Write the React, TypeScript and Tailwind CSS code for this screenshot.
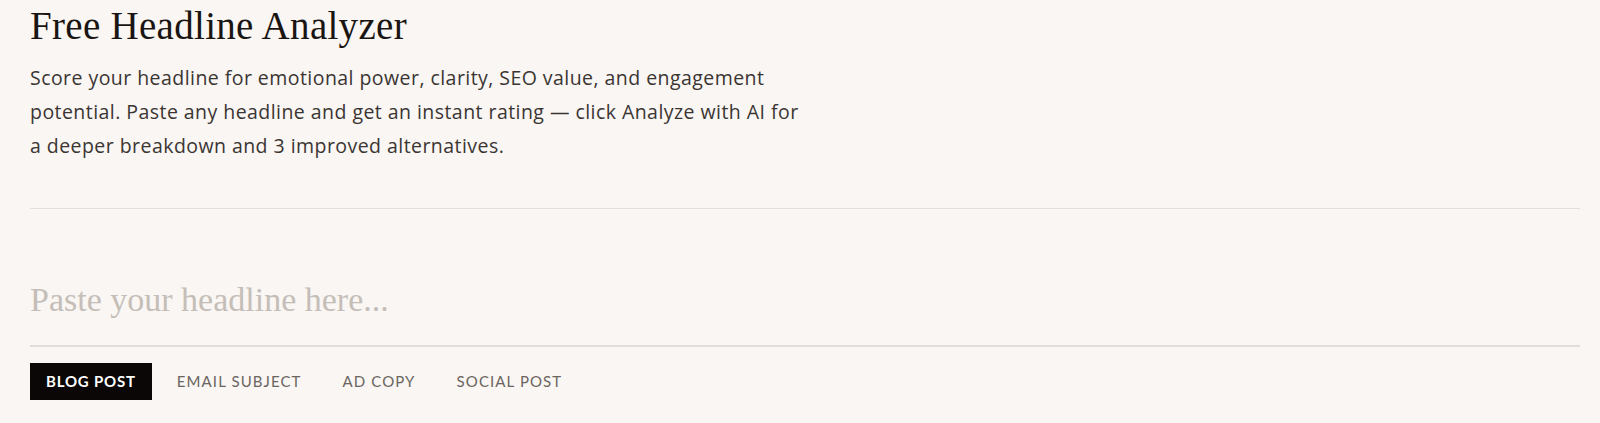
import { useState } from 'react';

const tabs = ['Blog Post', 'Email Subject', 'Ad Copy', 'Social Post'];

const serif = "font-['Liberation_Serif','DejaVu_Serif',serif]";
const sans = "font-['Lato','Open_Sans',sans-serif]";

const App = () => {
  const [headline, setHeadline] = useState('');
  const [active, setActive] = useState(0);

  return (
    <div className="min-h-[423px] bg-[#f9f6f3] pl-[30px] pr-[20px]">
      {/* Intro */}
      <div className="pt-[3px] pb-[45px] border-b border-[#e4dfdb]">
        <h1 className={`${serif} text-[39px] leading-[46px] text-[#1a1512] tracking-[0.3px]`}>
          Free Headline Analyzer
        </h1>
        <p className="font-['Open_Sans','Lato',sans-serif] mt-[12px] max-w-[780px] text-[19.5px] leading-[34px] tracking-[0.45px] text-[#3b3532]">
          Score your headline for emotional power, clarity, SEO value, and engagement
          potential. Paste any headline and get an instant rating — click Analyze with AI for
          a deeper breakdown and 3 improved alternatives.
        </p>
      </div>

      {/* Headline input */}
      <div className="pt-[69px] border-b-2 border-[#e2ddd9]">
        <input
          value={headline}
          onChange={(e) => setHeadline(e.target.value)}
          placeholder="Paste your headline here..."
          className={`${serif} w-full bg-transparent outline-none text-[34px] leading-[44px] pb-[23px] text-[#1a1512] placeholder:text-[#c5beb8]`}
        />
      </div>

      {/* Content type */}
      <div className="flex items-center gap-[4px] pt-[16px]">
        {tabs.map((tab, i) => (
          <button
            key={tab}
            onClick={() => setActive(i)}
            className={`${sans} h-[37px] px-[16px] mr-[5px] uppercase text-[15px] ${
              i === active
                ? 'bg-[#0a0706] text-white font-bold tracking-[0.8px]'
                : 'text-[#6b6560] tracking-[1.1px]'
            }`}
          >
            {tab}
          </button>
        ))}
      </div>
    </div>
  );
};

export default App;
